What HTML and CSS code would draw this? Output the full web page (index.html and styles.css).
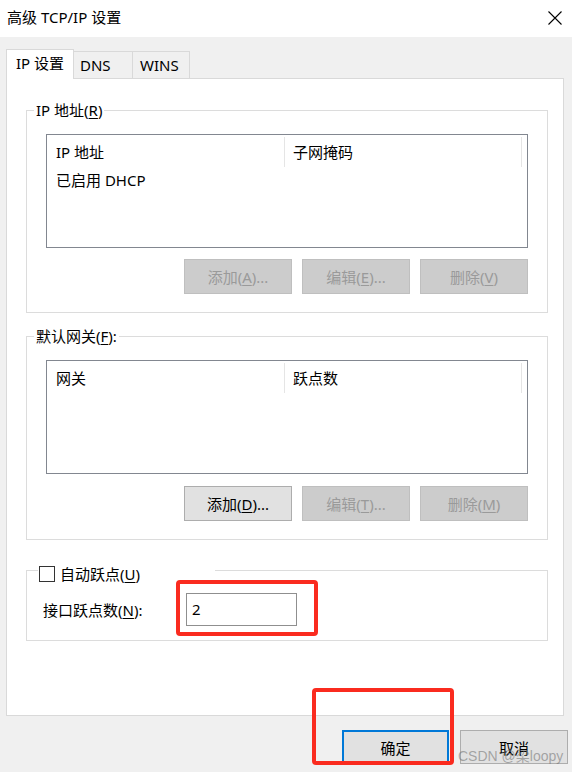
FILE: index.html
```html
<!DOCTYPE html>
<html lang="zh-CN">
<head>
<meta charset="utf-8">
<title>高级 TCP/IP 设置</title>
<link rel="stylesheet" href="styles.css">
</head>
<body>
<div class="titlebar">
  <span class="title">高级 TCP/IP 设置</span>
  <svg class="close" width="14" height="14" viewBox="0 0 14 14"><path d="M0.5 0.5 L13.5 13.5 M13.5 0.5 L0.5 13.5" stroke="#000" stroke-width="1.1" fill="none"/></svg>
</div>
<div class="dialog">
  <div class="tabs">
    <div class="tab active">IP 设置</div>
    <div class="tab tab-dns">DNS</div>
    <div class="tab tab-wins">WINS</div>
  </div>
  <div class="panel">
    <div class="group g1">
      <div class="legend">IP 地址(<u>R</u>)</div>
      <div class="listbox">
        <div class="lv-head">
          <div class="col c1">IP 地址</div>
          <div class="col c2">子网掩码</div>
        </div>
        <div class="lv-row">已启用 DHCP</div>
      </div>
      <div class="btnrow">
        <button class="btn disabled">添加(<u>A</u>)...</button>
        <button class="btn disabled">编辑(<u>E</u>)...</button>
        <button class="btn disabled">删除(<u>V</u>)</button>
      </div>
    </div>
    <div class="group g2">
      <div class="legend">默认网关(<u>F</u>):</div>
      <div class="listbox">
        <div class="lv-head">
          <div class="col c1">网关</div>
          <div class="col c2">跃点数</div>
        </div>
      </div>
      <div class="btnrow">
        <button class="btn">添加(<u>D</u>)...</button>
        <button class="btn disabled">编辑(<u>T</u>)...</button>
        <button class="btn disabled">删除(<u>M</u>)</button>
      </div>
    </div>
    <div class="group g3">
      <div class="legend check-legend">
        <span class="checkbox"></span>
        <span class="check-label">自动跃点(<u>U</u>)</span>
      </div>
      <div class="hop-row">
        <span class="hop-label">接口跃点数(<u>N</u>):</span>
        <div class="input">2</div>
      </div>
    </div>
  </div>
  <div class="footer">
    <button class="fbtn primary">确定</button>
    <button class="fbtn">取消</button>
  </div>
</div>
<div class="mark mark1"></div>
<div class="mark mark2"></div>
<div class="watermark">CSDN @梁loopy</div>
</body>
</html>
```
FILE: styles.css
```css
* { box-sizing: border-box; }
html, body {
  margin: 0;
  padding: 0;
}
body {
  width: 572px;
  height: 772px;
  overflow: hidden;
  background: #f0f0f0;
  font-family: "Noto Sans", "Noto Sans CJK SC", sans-serif;
  font-size: 15px;
  color: #000;
  position: relative;
}
u { text-underline-offset: 2px; text-decoration-thickness: 1px; }

.titlebar {
  height: 37px;
  background: #fff;
  display: flex;
  align-items: flex-start;
}
.title {
  padding: 7px 0 0 7px;
  line-height: 20px;
}
.close {
  margin: 11px 10px 0 auto;
}

.dialog {
  padding: 12px 0 0 6px;
}
.tabs {
  display: flex;
  align-items: flex-end;
  height: 29px;
}
.tab {
  height: 27px;
  border: 1px solid #d9d9d9;
  border-left: none;
  border-bottom: none;
  background: #f0f0f0;
  line-height: 20px;
  padding-top: 3px;
}
.tab.active {
  height: 30px;
  width: 68px;
  margin-bottom: -1px;
  border-left: 1px solid #d9d9d9;
  background: #fff;
  padding-left: 9px;
  padding-top: 3px;
  position: relative;
  z-index: 1;
}
.tab-dns { width: 59px; padding-left: 6px; }
.tab-wins { width: 57px; padding-left: 7px; }

.panel {
  width: 558px;
  height: 638px;
  background: #fff;
  border: 1px solid #d9d9d9;
  padding: 0 15px 0 19px;
}

.group {
  border: 1px solid #dcdcdc;
  padding: 0 19px 18px 19px;
}
.g1 { margin-top: 31px; }
.g2 { margin-top: 23px; }
.g3 { margin-top: 30px; padding: 0 0 14px 0; }

.legend {
  width: fit-content;
  margin: -11px 0 0 -12px;
  padding: 0 2px;
  line-height: 20px;
  background: #fff;
}

.listbox {
  margin-top: 14px;
  height: 114px;
  border: 1px solid #828790;
}
.lv-head {
  display: flex;
  align-items: center;
  height: 33px;
}
.col {
  height: 30px;
  line-height: 30px;
  border-right: 1px solid #e5e5e5;
}
.c1 { width: 238px; padding-left: 9px; }
.c2 { width: 237px; padding-left: 8px; }
.lv-row {
  height: 24px;
  line-height: 24px;
  padding-left: 9px;
}

.btnrow {
  display: flex;
  justify-content: flex-end;
  gap: 10px;
  margin-top: 11px;
}
.g2 .btnrow { margin-top: 12px; }
.btn {
  width: 108px;
  height: 35px;
  padding: 0;
  font: inherit;
  color: #000;
  background: #e1e1e1;
  border: 1px solid #adadad;
}
.btn.disabled {
  background: #cccccc;
  border-color: #bfbfbf;
  color: #9a9a9a;
}

.check-legend {
  display: flex;
  align-items: center;
  width: 177px;
  margin: -7px 0 0 11px;
  padding: 0 0 0 1px;
}
.checkbox {
  width: 16px;
  height: 16px;
  border: 1px solid #333;
  background: #fff;
}
.check-label {
  margin-left: 5px;
}
.hop-row {
  display: flex;
  align-items: center;
  margin-top: 9px;
}
.hop-label {
  width: 159px;
  padding-left: 16px;
  line-height: 20px;
}
.input {
  width: 111px;
  height: 33px;
  border: 1px solid #8f8f8f;
  padding-left: 5px;
  line-height: 31px;
}

.footer {
  display: flex;
  justify-content: flex-end;
  gap: 11px;
  margin-top: 14px;
  padding-right: 4px;
}
.fbtn {
  width: 108px;
  height: 34px;
  padding: 0;
  font: inherit;
  color: #000;
  background: #e1e1e1;
  border: 1px solid #adadad;
}
.fbtn.primary {
  width: 107px;
  border: 2px solid #0078d7;
}

.mark {
  position: absolute;
  border: 4px solid #fa2b1f;
  border-radius: 4px;
}
.mark1 { left: 176px; top: 580px; width: 142px; height: 56px; }
.mark2 { left: 312px; top: 688px; width: 142px; height: 77px; }

.watermark {
  position: absolute;
  left: 458px;
  top: 746px;
  font-family: "Liberation Sans", "Noto Sans CJK SC", sans-serif;
  font-size: 14px;
  line-height: 20px;
  color: rgba(120, 120, 120, 0.6);
}
```
